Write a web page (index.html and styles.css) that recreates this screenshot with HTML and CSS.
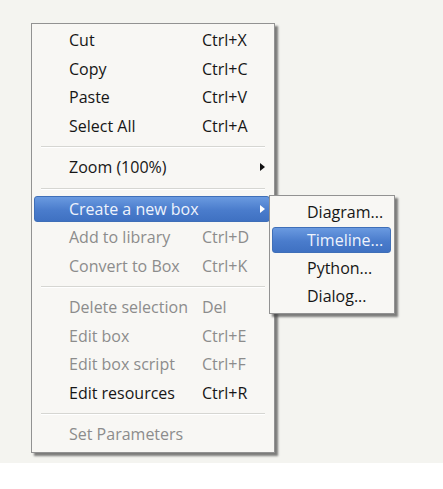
FILE: index.html
```html
<!DOCTYPE html>
<html lang="en">
<head>
<meta charset="utf-8">
<title>Context menu</title>
<link rel="stylesheet" href="styles.css">
</head>
<body>
<div class="screen">
  <div class="menu">
    <div class="item"><span class="label">Cut</span><span class="key">Ctrl+X</span></div>
    <div class="item"><span class="label">Copy</span><span class="key">Ctrl+C</span></div>
    <div class="item"><span class="label">Paste</span><span class="key">Ctrl+V</span></div>
    <div class="item"><span class="label">Select All</span><span class="key">Ctrl+A</span></div>
    <div class="sep"></div>
    <div class="item"><span class="label">Zoom (100%)</span><span class="arrow"></span></div>
    <div class="sep"></div>
    <div class="item is-active"><span class="label">Create a new box</span><span class="arrow"></span>
      <div class="submenu">
        <div class="sub-item">Diagram...</div>
        <div class="sub-item is-active">Timeline...</div>
        <div class="sub-item">Python...</div>
        <div class="sub-item">Dialog...</div>
      </div>
    </div>
    <div class="item is-disabled"><span class="label">Add to library</span><span class="key">Ctrl+D</span></div>
    <div class="item is-disabled"><span class="label">Convert to Box</span><span class="key">Ctrl+K</span></div>
    <div class="sep"></div>
    <div class="item is-disabled"><span class="label">Delete selection</span><span class="key">Del</span></div>
    <div class="item is-disabled"><span class="label">Edit box</span><span class="key">Ctrl+E</span></div>
    <div class="item is-disabled"><span class="label">Edit box script</span><span class="key">Ctrl+F</span></div>
    <div class="item"><span class="label">Edit resources</span><span class="key">Ctrl+R</span></div>
    <div class="sep"></div>
    <div class="item is-disabled"><span class="label">Set Parameters</span></div>
  </div>
</div>
</body>
</html>
```

FILE: styles.css
```css
html, body {
  margin: 0;
  padding: 0;
  background: #ffffff;
}

body {
  font-family: "Open Sans", "Noto Sans", "DejaVu Sans", sans-serif;
  font-size: 16px;
  color: #161616;
}

.screen {
  width: 443px;
  height: 463px;
  background: #f4f4f0;
  padding: 23px 0 0 31px;
  box-sizing: border-box;
}

.menu {
  width: 244px;
  box-sizing: border-box;
  background: #f8f7f4;
  border: 1px solid #929292;
  padding: 2px 0 3px;
  box-shadow: 3px 3px 2px rgba(60, 60, 60, 0.65);
}

.item {
  position: relative;
  display: grid;
  grid-template-columns: 133px 1fr;
  align-items: center;
  height: 28.5px;
  line-height: 28.5px;
  padding: 0 9px 0 37px;
  white-space: nowrap;
}

.label,
.key {
  position: relative;
}

.item.is-disabled {
  color: #8c8c8c;
}

.item.is-active {
  color: #eef3fc;
}

.item.is-active::before {
  content: "";
  position: absolute;
  top: 1.5px;
  bottom: 1px;
  left: 2px;
  right: 4px;
  border-radius: 3px;
  border: 1px solid #3f6fb8;
  background: linear-gradient(#6a9ae0, #4a7ccc 55%, #3f71c2);
}

.arrow {
  justify-self: end;
  position: relative;
  width: 0;
  height: 0;
  border-left: 5px solid #111111;
  border-top: 4.5px solid transparent;
  border-bottom: 4.5px solid transparent;
}

.item.is-active .arrow {
  border-left-color: #ffffff;
}

.sep {
  margin: 6px 9px 5px;
  border-top: 1px solid #d6d6d2;
  border-bottom: 1px solid #ffffff;
}

.submenu {
  position: absolute;
  top: 0.5px;
  left: 237px;
  z-index: 2;
  width: 126px;
  box-sizing: border-box;
  background: #f8f7f4;
  border: 1px solid #929292;
  padding: 2px 0 3px;
  box-shadow: 3px 3px 2px rgba(60, 60, 60, 0.65);
  color: #161616;
}

.sub-item {
  position: relative;
  z-index: 0;
  height: 28px;
  line-height: 28px;
  padding-left: 37px;
  white-space: nowrap;
}

.sub-item.is-active {
  color: #eef3fc;
}

.sub-item.is-active::before {
  content: "";
  position: absolute;
  top: 1px;
  bottom: 1px;
  left: 2px;
  right: 3px;
  border-radius: 3px;
  border: 1px solid #3f6fb8;
  background: linear-gradient(#6a9ae0, #4a7ccc 55%, #3f71c2);
  z-index: -1;
}
```
